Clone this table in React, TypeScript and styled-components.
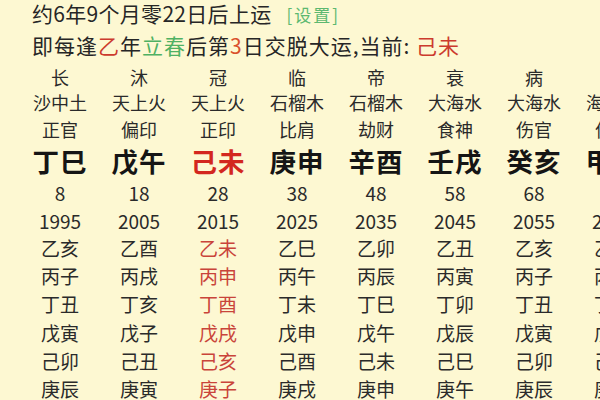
import React from "react";
import styled, { createGlobalStyle } from "styled-components";

const Global = createGlobalStyle`
  html, body { margin: 0; padding: 0; }
  body {
    width: 600px;
    height: 400px;
    overflow: hidden;
    background: #fdf8d2;
    font-family: "Noto Sans CJK SC", "Noto Sans", sans-serif;
    color: #2b2b2b;
  }
`;

const Page = styled.div`
  width: 600px;
  height: 400px;
  overflow: hidden;
  background: #fdf8d2;
`;

const Header = styled.div`
  padding-left: 32px;
  height: 64.5px;
  display: flex;
  flex-direction: column;
`;

const Line = styled.div<{ $size: number; $spacing?: number; $top?: number }>`
  font-size: ${(p) => p.$size}px;
  letter-spacing: ${(p) => p.$spacing ?? 0}px;
  line-height: 26px;
  height: 26px;
  margin-top: ${(p) => p.$top ?? 0}px;
  white-space: nowrap;
  color: #262626;
`;

const Red = styled.span`
  color: #cc3b2e;
`;
const Green = styled.span`
  color: #4fb163;
`;
const Orange = styled.span`
  color: #d9502c;
`;

const Setting = styled.span`
  color: #5cb870;
  font-size: 17px;
  margin-left: 15px;
  letter-spacing: 2px;
`;

const Grid = styled.div`
  display: flex;
  padding-left: 20.5px;
`;

const Column = styled.div`
  flex: 0 0 79px;
  width: 79px;
  display: flex;
  flex-direction: column;
  align-items: center;
  color: #2a2a2a;
`;

const Cell = styled.div<{ $h: number; $size: number }>`
  height: ${(p) => p.$h}px;
  line-height: ${(p) => p.$h}px;
  font-size: ${(p) => p.$size}px;
  white-space: nowrap;
`;

const Pillar = styled(Cell)<{ $current?: boolean }>`
  font-weight: 700;
  color: ${(p) => (p.$current ? "#d3271f" : "#151515")};
  letter-spacing: 1px;
`;

const YearPillar = styled(Cell)<{ $current?: boolean }>`
  color: ${(p) => (p.$current ? "#c9443a" : "#2a2a2a")};
`;

type Col = {
  stage: string;
  nayin: string;
  god: string;
  pillar: string;
  age: number;
  year: number;
  years: string[];
  current?: boolean;
};

const cols: Col[] = [
  { stage: "长", nayin: "沙中土", god: "正官", pillar: "丁巳", age: 8, year: 1995, years: ["乙亥", "丙子", "丁丑", "戊寅", "己卯", "庚辰"] },
  { stage: "沐", nayin: "天上火", god: "偏印", pillar: "戊午", age: 18, year: 2005, years: ["乙酉", "丙戌", "丁亥", "戊子", "己丑", "庚寅"] },
  { stage: "冠", nayin: "天上火", god: "正印", pillar: "己未", age: 28, year: 2015, years: ["乙未", "丙申", "丁酉", "戊戌", "己亥", "庚子"], current: true },
  { stage: "临", nayin: "石榴木", god: "比肩", pillar: "庚申", age: 38, year: 2025, years: ["乙巳", "丙午", "丁未", "戊申", "己酉", "庚戌"] },
  { stage: "帝", nayin: "石榴木", god: "劫财", pillar: "辛酉", age: 48, year: 2035, years: ["乙卯", "丙辰", "丁巳", "戊午", "己未", "庚申"] },
  { stage: "衰", nayin: "大海水", god: "食神", pillar: "壬戌", age: 58, year: 2045, years: ["乙丑", "丙寅", "丁卯", "戊辰", "己巳", "庚午"] },
  { stage: "病", nayin: "大海水", god: "伤官", pillar: "癸亥", age: 68, year: 2055, years: ["乙亥", "丙子", "丁丑", "戊寅", "己卯", "庚辰"] },
  { stage: "死", nayin: "海中金", god: "偏财", pillar: "甲子", age: 78, year: 2065, years: ["乙酉", "丙戌", "丁亥", "戊子", "己丑", "庚寅"] },
];

export default function App() {
  return (
    <Page>
      <Global />
      <Header>
        <Line $size={21} $spacing={0.3}>
          约6年9个月零22日后上运<Setting>[设置]</Setting>
        </Line>
        <Line $size={21} $spacing={1} $top={6}>
          即每逢<Red>乙</Red>年<Green>立春</Green>后第<Orange>3</Orange>日交脱大运,当前: <Red>己未</Red>
        </Line>
      </Header>
      <Grid>
        {cols.map((c) => (
          <Column key={c.year}>
            <Cell $h={25} $size={18}>{c.stage}</Cell>
            <Cell $h={25} $size={18}>{c.nayin}</Cell>
            <Cell $h={28} $size={18}>{c.god}</Cell>
            <Pillar $h={36} $size={26.5} $current={c.current}>{c.pillar}</Pillar>
            <Cell $h={28} $size={19}>{c.age}</Cell>
            <Cell $h={27} $size={19}>{c.year}</Cell>
            {c.years.map((y) => (
              <YearPillar key={y} $h={28.4} $size={19} $current={c.current}>{y}</YearPillar>
            ))}
          </Column>
        ))}
      </Grid>
    </Page>
  );
}
